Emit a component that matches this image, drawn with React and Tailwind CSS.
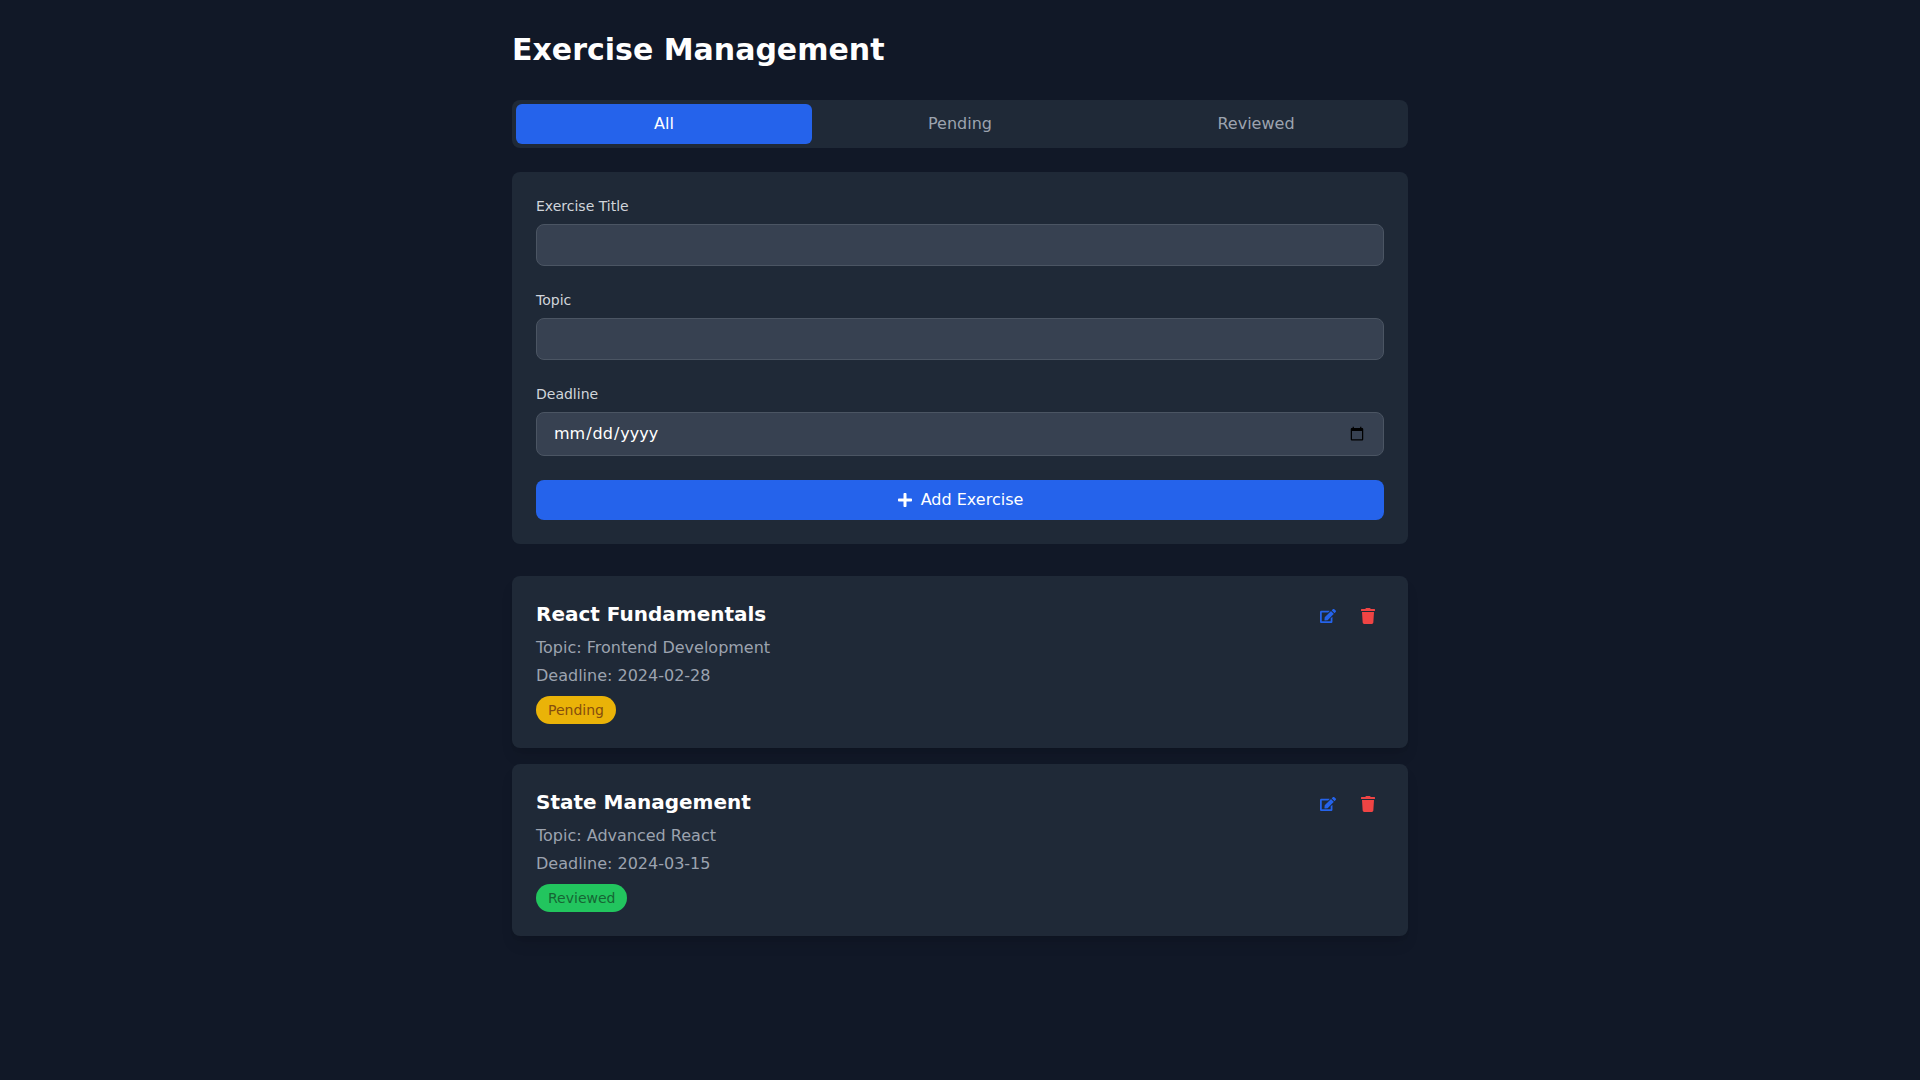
import React from 'react';
import { FaEdit, FaPlus, FaTrash } from 'react-icons/fa';

const exercises = [
  {
    title: 'React Fundamentals',
    topic: 'Frontend Development',
    deadline: '2024-02-28',
    status: 'Pending',
    badge: 'bg-[#eab308] text-[#854d0e]',
  },
  {
    title: 'State Management',
    topic: 'Advanced React',
    deadline: '2024-03-15',
    status: 'Reviewed',
    badge: 'bg-[#22c55e] text-[#166534]',
  },
];

const tabs = ['All', 'Pending', 'Reviewed'];

const Field = ({ label, type = 'text', className = 'py-2' }) => (
  <div>
    <label className="block text-sm text-[#d1d5db] mb-2">{label}</label>
    <input
      type={type}
      className={`w-full px-4 bg-[#374151] border border-[#4b5563] rounded-lg text-white ${className}`}
    />
  </div>
);

const ExerciseCard = ({ exercise }) => (
  <div className="bg-[#1f2937] rounded-lg p-6 shadow-lg flex items-start justify-between">
    <div>
      <h3 className="text-xl font-bold text-white mb-2">{exercise.title}</h3>
      <p className="text-base text-[#9ca3af] mb-1">Topic: {exercise.topic}</p>
      <p className="text-base text-[#9ca3af]">Deadline: {exercise.deadline}</p>
      <span className={`inline-block mt-2 px-3 py-1 rounded-full text-sm ${exercise.badge}`}>
        {exercise.status}
      </span>
    </div>
    <div className="flex gap-2">
      <button className="p-2 text-[#2563eb]">
        <FaEdit className="w-4 h-4" />
      </button>
      <button className="p-2 text-[#ef4444]">
        <FaTrash className="w-4 h-4" />
      </button>
    </div>
  </div>
);

export default function App() {
  return (
    <div className="min-h-screen bg-[#111827] p-8 font-['DejaVu_Sans',sans-serif]">
      <div className="max-w-4xl mx-auto">
        <h1 className="text-3xl font-bold text-white mb-8">Exercise Management</h1>

        <div className="flex bg-[#1f2937] rounded-lg p-1 mb-6">
          {tabs.map((tab, i) => (
            <button
              key={tab}
              className={`flex-1 py-2 rounded-md text-base ${i === 0 ? 'bg-[#2563eb] text-white' : 'text-[#9ca3af]'}`}
            >
              {tab}
            </button>
          ))}
        </div>

        <form className="bg-[#1f2937] rounded-lg p-6 mb-8 flex flex-col gap-6">
          <Field label="Exercise Title" />
          <Field label="Topic" />
          <Field label="Deadline" type="date" className="py-[9px]" />
          <button
            type="button"
            className="w-full py-2 bg-[#2563eb] text-white rounded-lg text-base flex items-center justify-center gap-2"
          >
            <FaPlus className="w-4 h-4" />
            <span>Add Exercise</span>
          </button>
        </form>

        <div className="flex flex-col gap-4">
          {exercises.map((exercise) => (
            <ExerciseCard key={exercise.title} exercise={exercise} />
          ))}
        </div>
      </div>
    </div>
  );
}
